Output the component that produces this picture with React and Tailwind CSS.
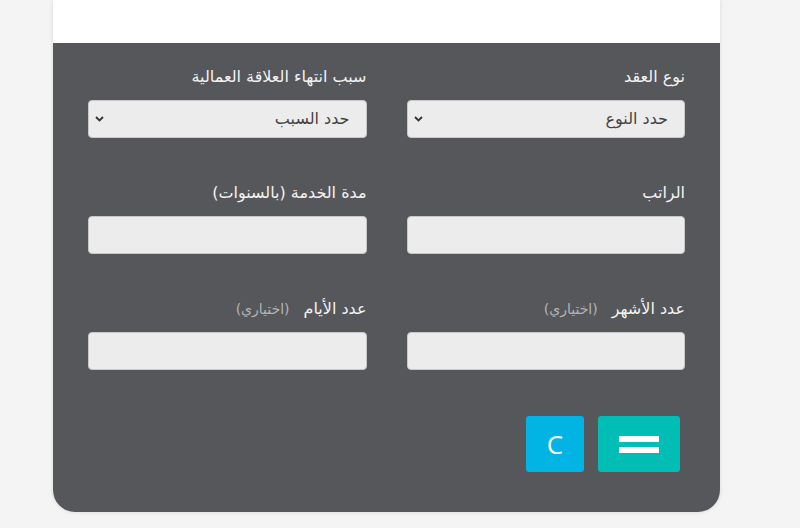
import React from "react";

function Chevron() {
  return (
    <svg className="absolute left-[6px] top-1/2 -translate-y-1/2" width="9" height="6" viewBox="0 0 9 6">
      <path d="M1 1 L4.5 4.5 L8 1" fill="none" stroke="#333" strokeWidth="1.8" />
    </svg>
  );
}

function Label({ text, optional }) {
  return (
    <div className="h-5 leading-5 text-[16px] text-[#f2f2f2] flex items-center gap-[14px]">
      <span>{text}</span>
      {optional && <span className="text-[14px] text-[#b4b4b4]">(اختياري)</span>}
    </div>
  );
}

function SelectField({ label, placeholder }) {
  return (
    <div className="flex flex-col">
      <Label text={label} />
      <div className="relative mt-[13px] h-[38px] rounded-[4px] border border-[#c8c8c8] bg-[#ececec] flex items-center pr-[16px] text-[16px] text-[#444]">
        {placeholder}
        <Chevron />
      </div>
    </div>
  );
}

function InputField({ label, optional }) {
  return (
    <div className="flex flex-col">
      <Label text={label} optional={optional} />
      <div className="mt-[13px] h-[38px] rounded-[4px] border border-[#c8c8c8] bg-[#ececec]" />
    </div>
  );
}

export default function App() {
  return (
    <div
      className="w-[800px] h-[528px] bg-[#f4f4f4] overflow-hidden"
      style={{ fontFamily: '"DejaVu Sans", "Open Sans", sans-serif' }}
    >
      <div className="ml-[53px] w-[667px] rounded-b-[22px] shadow-[0_0_4px_rgba(0,0,0,0.12)] overflow-hidden">
        <div className="h-[43px] bg-white" />
        <div dir="rtl" className="bg-[#56575b] px-[35px] pt-[24px] pb-[40px]">
          <div className="grid grid-cols-2 gap-x-[40px] gap-y-[45px]">
            <SelectField label="نوع العقد" placeholder="حدد النوع" />
            <SelectField label="سبب انتهاء العلاقة العمالية" placeholder="حدد السبب" />
            <InputField label="الراتب" />
            <InputField label="مدة الخدمة (بالسنوات)" />
            <InputField label="عدد الأشهر" optional />
            <InputField label="عدد الأيام" optional />
          </div>
          <div className="mt-[46px] flex gap-[14px] pr-[5px]">
            <button className="w-[82px] h-[56px] rounded-[3px] bg-[#00bdb5] flex flex-col items-center justify-center gap-[5px]">
              <span className="block w-[40px] h-[6px] bg-white" />
              <span className="block w-[40px] h-[6px] bg-white" />
            </button>
            <button
              className="w-[58px] h-[56px] rounded-[3px] bg-[#02b4e4] text-white text-[26px] font-normal flex items-center justify-center"
              style={{ fontFamily: '"Open Sans", sans-serif' }}
            >
              C
            </button>
          </div>
        </div>
      </div>
    </div>
  );
}
